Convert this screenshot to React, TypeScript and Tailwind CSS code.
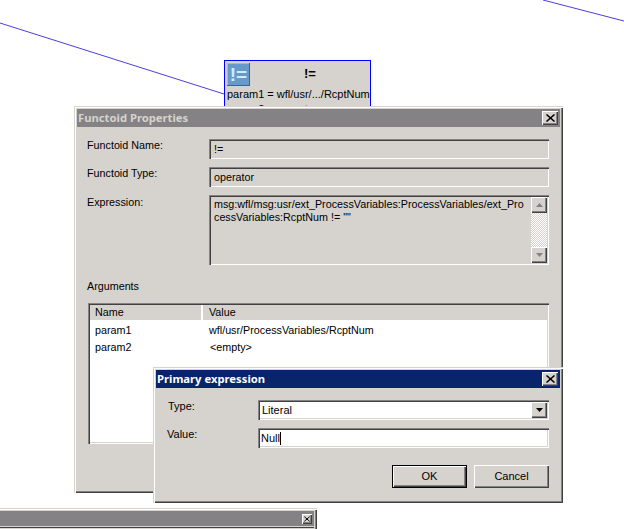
import React from 'react';

const WINDOW_BEVEL = 'shadow-[inset_1px_1px_0_#d6d3ce,inset_2px_2px_0_#fff,inset_-1px_-1px_0_#424142,inset_-2px_-2px_0_#848284]';
const RAISED = 'shadow-[inset_1px_1px_0_#fff,inset_-1px_-1px_0_#424142,inset_-2px_-2px_0_#848284]';
const SUNKEN = 'shadow-[inset_1px_1px_0_#848284,inset_2px_2px_0_#424142,inset_-1px_-1px_0_#fff,inset_-2px_-2px_0_#d6d3ce]';

const CloseButton: React.FC<{ size?: 'sm' | 'md' }> = ({ size = 'md' }) => (
  <div className={`flex items-center justify-center bg-[#d6d3ce] ${RAISED} ${size === 'md' ? 'w-4 h-3.5' : 'w-2.5 h-2.5'}`}>
    <svg width={size === 'md' ? 9 : 6} height={size === 'md' ? 8 : 6} viewBox="0 0 9 8" className="block">
      <path d="M0.5 0.5L8.5 7.5M8.5 0.5L0.5 7.5" stroke="#000" strokeWidth="1.5" fill="none" />
    </svg>
  </div>
);

const TitleBar: React.FC<{ title: string; active?: boolean }> = ({ title, active }) => (
  <div className={`h-[18px] flex items-center justify-between pl-[1px] pr-[2px] ${active ? 'bg-[#08246b] text-white' : 'bg-[#848284] text-[#d6d3ce]'}`}>
    <span className="font-['Noto_Sans',sans-serif] text-[11.25px] font-bold leading-none -mt-[1px]">{title}</span>
    <CloseButton />
  </div>
);

const ReadOnlyField: React.FC<{ value: string }> = ({ value }) => (
  <div className={`h-5 w-[340px] pl-[5px] pt-px flex items-center text-black ${SUNKEN}`}>{value}</div>
);

const ScrollArrow: React.FC<{ up?: boolean }> = ({ up }) => (
  <div className={`h-4 w-4 flex items-center justify-center bg-[#d6d3ce] ${RAISED}`}>
    <svg width="7" height="4" viewBox="0 0 7 4" className="block">
      <path d={up ? 'M3.5 0L7 4H0Z' : 'M0 0H7L3.5 4Z'} fill="#848284" />
    </svg>
  </div>
);

const FunctoidNode: React.FC = () => (
  <div className="absolute left-[224px] top-[60px] w-[147px] h-[60px] border border-[#0000ff] bg-[#d6d3ce] overflow-hidden">
    <div className="flex h-[26px] pl-[2px] pt-[2px]">
      <div className="w-[23px] h-[23px] bg-[#6699cc] flex items-center justify-center shadow-[inset_-1px_-1px_0_#336699,inset_1px_1px_0_#99bbdd]">
        <span className="text-[#cceeff] text-[19px] font-bold leading-none">!=</span>
      </div>
      <div className="flex-1 text-center text-[13px] font-bold text-black pt-[1px]">!=</div>
    </div>
    <div className="pl-[2px] text-[11px] leading-[15px] text-black whitespace-nowrap">
      <div>param1 = wfl/usr/.../RcptNum</div>
      <div>param2 = &lt;empty&gt;</div>
    </div>
  </div>
);

const FunctoidDialog: React.FC = () => (
  <div className={`absolute left-[74px] top-[106px] w-[489px] h-[387px] p-[3px] bg-[#d6d3ce] ${WINDOW_BEVEL}`}>
    <TitleBar title="Functoid Properties" />
    <div className="pl-[10px] pr-[11px] pt-[12px] text-[10.75px] text-black">
      <div className="flex flex-col gap-2">
        <div className="flex">
          <div className="w-[122px] leading-[13px]">Functoid Name:</div>
          <ReadOnlyField value="!=" />
        </div>
        <div className="flex">
          <div className="w-[122px] leading-[13px]">Functoid Type:</div>
          <ReadOnlyField value="operator" />
        </div>
        <div className="flex">
          <div className="w-[122px] leading-[13px] pt-px">Expression:</div>
          <div className={`relative w-[340px] h-[70px] flex ${SUNKEN}`}>
            <div className="flex-1 min-w-0 pl-[5px] pt-[3px] leading-[13px] whitespace-nowrap">
              <div>msg:wfl/msg:usr/ext_ProcessVariables:ProcessVariables/ext_Pro</div>
              <div>cessVariables:RcptNum != ""</div>
            </div>
            <div className="w-4 shrink-0 my-[2px] mr-[2px] flex flex-col justify-between bg-[repeating-conic-gradient(#d6d3ce_0_25%,#fff_0_50%)] bg-[length:2px_2px]">
              <ScrollArrow up />
              <ScrollArrow />
            </div>
          </div>
        </div>
      </div>
      <div className="mt-[15px] leading-[13px]">Arguments</div>
      <div className={`mt-[10px] ml-px w-[461px] h-[141px] bg-white p-[2px] ${SUNKEN}`}>
        <div className="flex h-[16px] bg-[#d6d3ce] border-b border-white">
          <div className="w-[113px] pl-[5px] leading-[15px] border-r-2 border-white">Name</div>
          <div className="flex-1 pl-[6px] leading-[15px]">Value</div>
        </div>
        <div className="flex h-[17px] mt-[1px] items-center">
          <div className="w-[113px] pl-[5px]">param1</div>
          <div className="pl-[6px]">wfl/usr/ProcessVariables/RcptNum</div>
        </div>
        <div className="flex h-[17px] items-center">
          <div className="w-[113px] pl-[5px]">param2</div>
          <div className="pl-[7px]">&lt;empty&gt;</div>
        </div>
      </div>
    </div>
  </div>
);

const PrimaryDialog: React.FC = () => (
  <div className={`absolute left-[153px] top-[367px] w-[410px] h-[136px] p-[3px] bg-[#d6d3ce] ${WINDOW_BEVEL}`}>
    <TitleBar title="Primary expression" active />
    <div className="pt-[12px] text-[11px] text-black">
      <div className="flex">
        <div className="w-[102px] pl-[12px] leading-[13px]">Type:</div>
        <div className={`w-[291px] h-5 bg-white flex items-center justify-between pl-[4px] pr-[2px] ${SUNKEN}`}>
          <span>Literal</span>
          <div className={`w-4 h-4 flex items-center justify-center bg-[#d6d3ce] ${RAISED}`}>
            <svg width="7" height="4" viewBox="0 0 7 4" className="block">
              <path d="M0 0H7L3.5 4Z" fill="#000" />
            </svg>
          </div>
        </div>
      </div>
      <div className="flex mt-2">
        <div className="w-[102px] pl-[11px] leading-[13px]">Value:</div>
        <div className={`w-[291px] h-5 bg-white flex items-center pl-[3px] ${SUNKEN}`}>
          <span>Null</span>
          <span className="w-px h-[13px] bg-black" />
        </div>
      </div>
      <div className="flex justify-end gap-[7px] mt-[17px] pr-[11px]">
        <div className="w-[75px] h-[23px] border border-black">
          <div className={`h-full flex items-center justify-center ${RAISED}`}>OK</div>
        </div>
        <div className={`w-[75px] h-[23px] flex items-center justify-center ${RAISED}`}>Cancel</div>
      </div>
    </div>
  </div>
);

const BottomWindow: React.FC = () => (
  <div className={`absolute left-[-200px] top-[508px] w-[517px] h-[40px] p-[3px] bg-[#d6d3ce] ${WINDOW_BEVEL}`}>
    <div className="h-[15px] bg-[#848284] flex items-center justify-end pr-[2px]">
      <CloseButton size="sm" />
    </div>
    <div className="h-px mt-px bg-[#424142]" />
  </div>
);

export default function App() {
  return (
    <div className="relative w-[624px] h-[529px] overflow-hidden bg-white font-['Liberation_Sans',sans-serif]">
      {/* links between functoids */}
      <svg width="624" height="529" className="absolute inset-0">
        <line x1="0" y1="23" x2="224" y2="94" stroke="#4a3fe0" strokeWidth="1" />
        <line x1="543" y1="0" x2="624" y2="21" stroke="#4a3fe0" strokeWidth="1" />
      </svg>
      <FunctoidNode />
      <FunctoidDialog />
      <PrimaryDialog />
      <BottomWindow />
    </div>
  );
}
